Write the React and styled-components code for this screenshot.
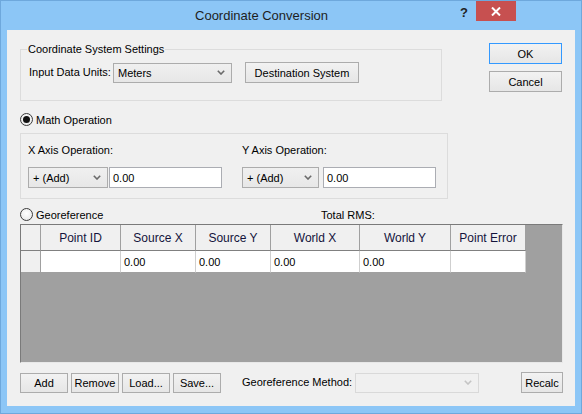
import React from "react";
import styled, { createGlobalStyle } from "styled-components";

const GlobalStyle = createGlobalStyle`
  html, body {
    margin: 0;
    padding: 0;
  }
  body {
    width: 582px;
    height: 414px;
    overflow: hidden;
    font-family: "Liberation Sans", Arial, sans-serif;
    font-size: 11px;
    color: #000;
  }
`;

const Window = styled.div`
  width: 582px;
  height: 414px;
  box-sizing: border-box;
  background: #8cc6f6;
  border: 1px solid #6ea8dc;
  display: flex;
  flex-direction: column;
`;

const TitleBar = styled.div`
  height: 29px;
  display: flex;
  align-items: flex-start;
`;

const Title = styled.div`
  flex: 1;
  padding-left: 67px;
  text-align: center;
  font-family: "Liberation Sans", Arial, sans-serif;
  font-size: 13px;
  line-height: 30px;
  color: #1e1e1e;
`;

const HelpBtn = styled.div`
  width: 18px;
  text-align: center;
  font-weight: bold;
  font-size: 13px;
  line-height: 24px;
  color: #222;
`;

const CloseBtn = styled.div`
  width: 40px;
  height: 20px;
  margin: 0 65px 0 3px;
  background: #c75050;
  display: flex;
  align-items: center;
  justify-content: center;
`;

const Client = styled.div`
  height: 376px;
  margin: 0 6px 7px 6px;
  box-sizing: border-box;
  background: #f0f0f0;
  padding: 13px 13px 0 13px;
  display: flex;
  flex-direction: column;
`;

const TopRow = styled.div`
  display: flex;
  justify-content: space-between;
  align-items: flex-start;
`;

const GroupBox = styled.fieldset`
  margin: 0;
  width: 422px;
  height: 58px;
  box-sizing: border-box;
  min-width: 0;
  padding: 7px 8px 0 8px;
  border: 1px solid #dcdcdc;
`;

const Legend = styled.legend`
  padding: 0 1px;
  margin-left: -2px;
  line-height: 12px;
  font-size: 11px;
`;

const SettingsRow = styled.div`
  display: flex;
  align-items: center;
  height: 21px;
`;

const FieldLabel = styled.span`
  width: ${(p) => p.$width}px;
  flex: none;
  white-space: nowrap;
  line-height: 13px;
`;

const Button = styled.div`
  width: ${(p) => p.$width}px;
  height: ${(p) => p.$height || 21}px;
  margin-left: ${(p) => p.$ml || 0}px;
  box-sizing: border-box;
  border: 1px solid ${(p) => (p.$default ? "#3399ff" : "#acacac")};
  background: linear-gradient(#f2f2f2, #e6e6e6);
  display: flex;
  align-items: center;
  justify-content: center;
  font-size: 11px;
  flex: none;
`;

const ButtonColumn = styled.div`
  display: flex;
  flex-direction: column;
  gap: 7px;
`;

const ComboBox = styled.div`
  width: ${(p) => p.$width}px;
  height: ${(p) => p.$height || 20}px;
  box-sizing: border-box;
  flex: none;
  border: 1px solid ${(p) => (p.$disabled ? "#d9d9d9" : "#acacac")};
  background: ${(p) => (p.$disabled ? "#f0f0f0" : "linear-gradient(#f0f0f0, #e7e7e7)")};
  display: flex;
  align-items: center;
  justify-content: space-between;
  padding: 0 6px 0 4px;
`;

const Chevron = ({ light }) => (
  <svg width="8" height="5" viewBox="0 0 8 5">
    <polyline
      points="0.8,0.8 4,4 7.2,0.8"
      fill="none"
      stroke={light ? "#c4c4c4" : "#6a6a6a"}
      strokeWidth="1.6"
    />
  </svg>
);

const TextBox = styled.div`
  width: ${(p) => p.$width}px;
  height: 21px;
  box-sizing: border-box;
  flex: none;
  margin-left: ${(p) => p.$ml}px;
  border: 1px solid #abadb3;
  background: #fff;
  padding-left: 3px;
  display: flex;
  align-items: center;
`;

const RadioRow = styled.div`
  display: flex;
  align-items: center;
  height: 13px;
  margin-top: ${(p) => p.$mt}px;
`;

const RadioPart = styled.div`
  display: flex;
  align-items: center;
  gap: 3px;
  width: ${(p) => p.$width || "auto"};
`;

const Radio = styled.span`
  width: 13px;
  height: 13px;
  box-sizing: border-box;
  border-radius: 50%;
  border: 1px solid #3c3c3c;
  background: radial-gradient(circle at 50% 40%, #ffffff, #e4e4e4);
  display: flex;
  align-items: center;
  justify-content: center;
  &::after {
    content: "";
    width: 7px;
    height: 7px;
    border-radius: 50%;
    background: #111;
    display: ${(p) => (p.$checked ? "block" : "none")};
  }
`;

const OperationPanel = styled.div`
  margin-top: 7px;
  width: 428px;
  height: 66px;
  box-sizing: border-box;
  border: 1px solid #dcdcdc;
  padding: 10px 7px 0 7px;
  display: flex;
  gap: 20px;
`;

const OpColumn = styled.div`
  display: flex;
  flex-direction: column;
`;

const OpInputs = styled.div`
  display: flex;
  margin-top: 10px;
`;

const GridBox = styled.div`
  margin-top: 3px;
  width: 543px;
  height: 139px;
  box-sizing: border-box;
  background: #a0a0a0;
  border: 1px solid;
  border-color: #7a7a7a #e8e8e8 #e8e8e8 #7a7a7a;
`;

const GridTable = styled.div`
  display: grid;
  grid-template-columns: 20px 80px 75px 75px 89px 91px 75px;
  grid-template-rows: 26px 22px;
  width: fit-content;
`;

const HeadCell = styled.div`
  background: #f0f0f0;
  border-right: 1px solid #a0a0a0;
  border-bottom: 1px solid #808080;
  display: flex;
  align-items: center;
  justify-content: center;
  font-size: 12px;
  color: #14143c;
`;

const RowHead = styled.div`
  background: #f0f0f0;
  border-right: 1px solid #a0a0a0;
  border-bottom: 1px solid #a0a0a0;
`;

const Cell = styled.div`
  background: #fff;
  border-right: 1px solid #cfcfcf;
  border-bottom: 1px solid #a0a0a0;
  display: flex;
  align-items: center;
  padding-left: 3px;
  font-size: 11px;
`;

const BottomRow = styled.div`
  display: flex;
  align-items: center;
  height: 21px;
  margin-top: 9px;
`;

const ButtonGroup = styled.div`
  display: flex;
  gap: 3px;
`;

const columns = ["Point ID", "Source X", "Source Y", "World X", "World Y", "Point Error"];
const values = ["", "0.00", "0.00", "0.00", "0.00", ""];

export default function App() {
  return (
    <>
      <GlobalStyle />
      <Window>
        <TitleBar>
          <Title>Coordinate Conversion</Title>
          <HelpBtn>?</HelpBtn>
          <CloseBtn>
            <svg width="10" height="9" viewBox="0 0 10 9">
              <path d="M1 0.5 L9 8.5 M9 0.5 L1 8.5" stroke="#fff" strokeWidth="2" />
            </svg>
          </CloseBtn>
        </TitleBar>
        <Client>
          <TopRow>
            <GroupBox>
              <Legend>Coordinate System Settings</Legend>
              <SettingsRow>
                <FieldLabel $width={84}>Input Data Units:</FieldLabel>
                <ComboBox $width={119}>
                  <span>Meters</span>
                  <Chevron />
                </ComboBox>
                <Button $width={114} $ml={13}>Destination System</Button>
              </SettingsRow>
            </GroupBox>
            <ButtonColumn>
              <Button $width={73} $default>OK</Button>
              <Button $width={73}>Cancel</Button>
            </ButtonColumn>
          </TopRow>

          <RadioRow $mt={12}>
            <RadioPart>
              <Radio $checked />
              <span>Math Operation</span>
            </RadioPart>
          </RadioRow>

          <OperationPanel>
            <OpColumn>
              <FieldLabel>X Axis Operation:</FieldLabel>
              <OpInputs>
                <ComboBox $width={80} $height={21}>
                  <span>+ (Add)</span>
                  <Chevron />
                </ComboBox>
                <TextBox $width={113} $ml={1}>0.00</TextBox>
              </OpInputs>
            </OpColumn>
            <OpColumn>
              <FieldLabel>Y Axis Operation:</FieldLabel>
              <OpInputs>
                <ComboBox $width={77} $height={21}>
                  <span>+ (Add)</span>
                  <Chevron />
                </ComboBox>
                <TextBox $width={113} $ml={4}>0.00</TextBox>
              </OpInputs>
            </OpColumn>
          </OperationPanel>

          <RadioRow $mt={9}>
            <RadioPart $width="301px">
              <Radio />
              <span>Georeference</span>
            </RadioPart>
            <span>Total RMS:</span>
          </RadioRow>

          <GridBox>
            <GridTable>
              <HeadCell />
              {columns.map((c) => (
                <HeadCell key={c}>{c}</HeadCell>
              ))}
              <RowHead />
              {values.map((v, i) => (
                <Cell key={i}>{v}</Cell>
              ))}
            </GridTable>
          </GridBox>

          <BottomRow>
            <ButtonGroup>
              <Button $width={48} $height={20}>Add</Button>
              <Button $width={48} $height={20}>Remove</Button>
              <Button $width={48} $height={20}>Load...</Button>
              <Button $width={48} $height={20}>Save...</Button>
            </ButtonGroup>
            <FieldLabel $width={113} style={{ marginLeft: 21 }}>Georeference Method:</FieldLabel>
            <ComboBox $width={124} $disabled>
              <span />
              <Chevron light />
            </ComboBox>
            <Button $width={42} $ml={42}>Recalc</Button>
          </BottomRow>
        </Client>
      </Window>
    </>
  );
}
